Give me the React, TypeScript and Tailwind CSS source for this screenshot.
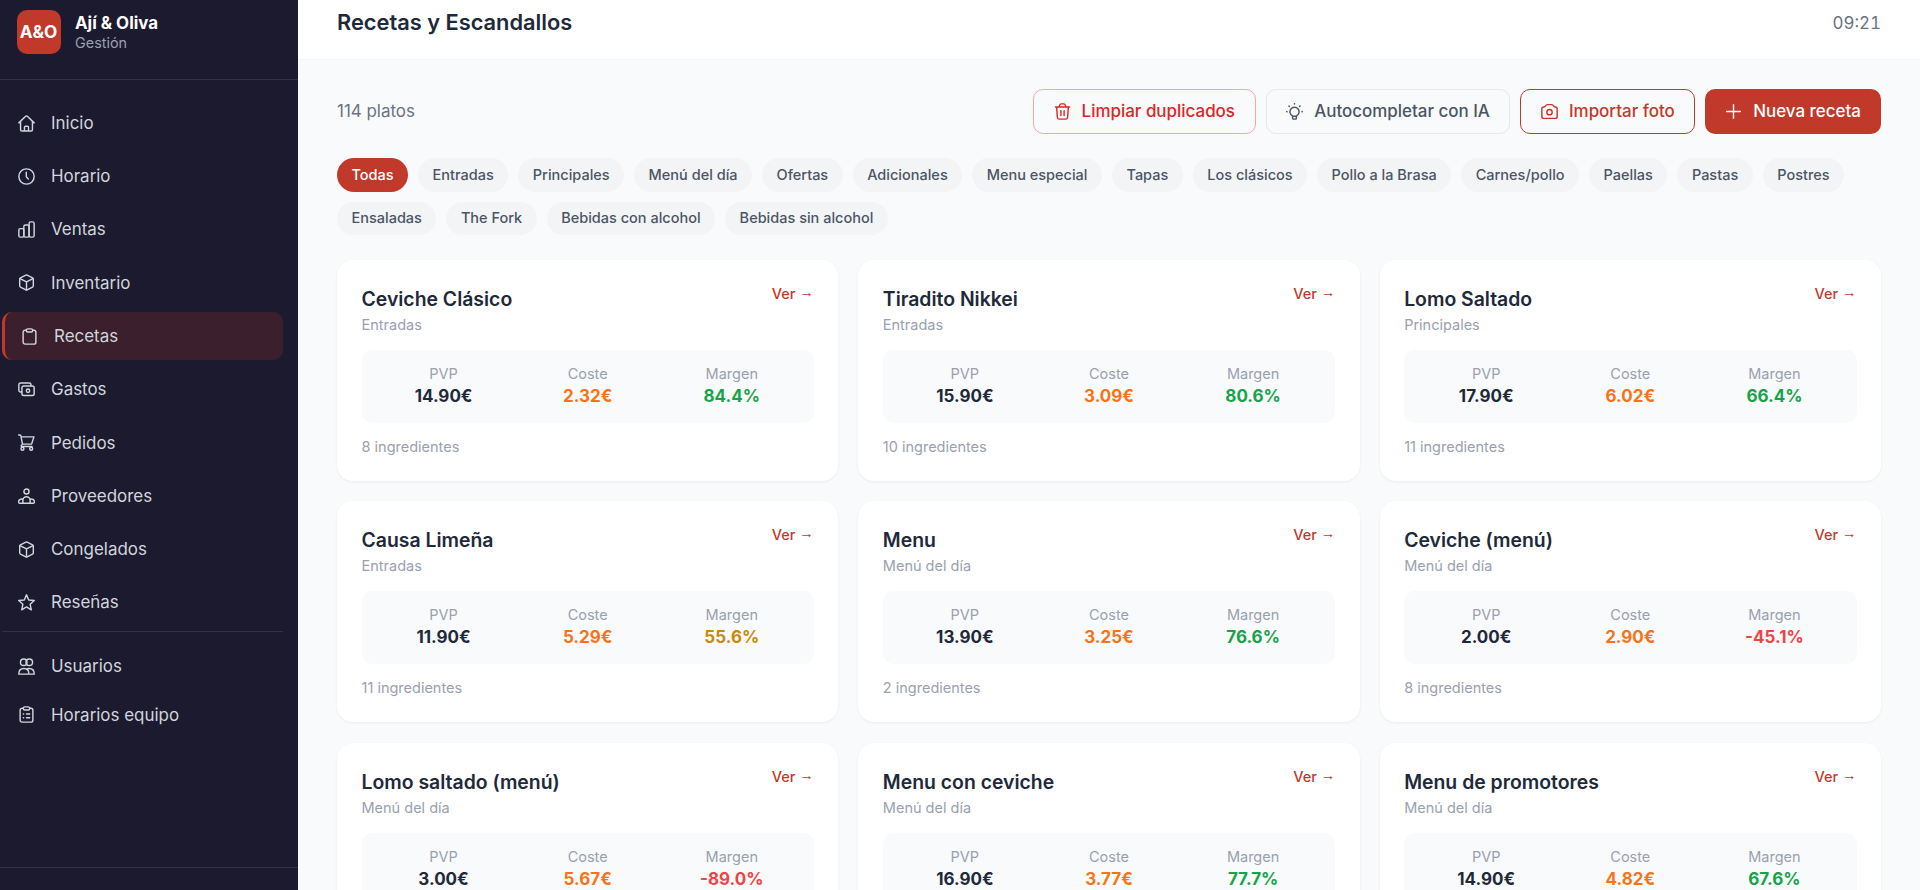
import { ReactNode } from "react";

const categories = [
  "Todas",
  "Entradas",
  "Principales",
  "Menú del día",
  "Ofertas",
  "Adicionales",
  "Menu especial",
  "Tapas",
  "Los clásicos",
  "Pollo a la Brasa",
  "Carnes/pollo",
  "Paellas",
  "Pastas",
  "Postres",
  "Ensaladas",
  "The Fork",
  "Bebidas con alcohol",
  "Bebidas sin alcohol",
];

const recipes = [
  { name: "Ceviche Clásico", category: "Entradas", pvp: 14.9, cost: 2.32, margin: 84.4, ingredients: 8 },
  { name: "Tiradito Nikkei", category: "Entradas", pvp: 15.9, cost: 3.09, margin: 80.6, ingredients: 10 },
  { name: "Lomo Saltado", category: "Principales", pvp: 17.9, cost: 6.02, margin: 66.4, ingredients: 11 },
  { name: "Causa Limeña", category: "Entradas", pvp: 11.9, cost: 5.29, margin: 55.6, ingredients: 11 },
  { name: "Menu", category: "Menú del día", pvp: 13.9, cost: 3.25, margin: 76.6, ingredients: 2 },
  { name: "Ceviche (menú)", category: "Menú del día", pvp: 2, cost: 2.9, margin: -45.1, ingredients: 8 },
  { name: "Lomo saltado (menú)", category: "Menú del día", pvp: 3, cost: 5.67, margin: -89, ingredients: 9 },
  { name: "Menu con ceviche", category: "Menú del día", pvp: 16.9, cost: 3.77, margin: 77.7, ingredients: 3 },
  { name: "Menu de promotores", category: "Menú del día", pvp: 14.9, cost: 4.82, margin: 67.6, ingredients: 4 },
];

function Icon({ children, className = "" }: { children: ReactNode; className?: string }) {
  return (
    <svg
      viewBox="0 0 16 16"
      fill="none"
      stroke="currentColor"
      strokeWidth="1.35"
      strokeLinecap="round"
      strokeLinejoin="round"
      className={`size-[17px] shrink-0 ${className}`}
    >
      {children}
    </svg>
  );
}

const box = (
  <>
    <path d="M7.4 1.1a1.3 1.3 0 0 1 1.2 0l5.1 2.6c.5.3.7.7.7 1.2v6.2c0 .5-.3 1-.7 1.2l-5.1 2.6a1.3 1.3 0 0 1-1.2 0l-5.1-2.6a1.4 1.4 0 0 1-.7-1.2V4.9c0-.5.2-.9.7-1.2z" />
    <path d="m1.9 4.4 6.1 3 6.1-3M8 7.4v7.4" />
  </>
);

const mainNav = [
  {
    label: "Inicio",
    icon: (
      <path d="M.8 7.4 7.2 1.2a1.2 1.2 0 0 1 1.6 0l6.4 6.2M2.4 6.2v7.6c0 .8.4 1.3 1.2 1.3h8.8c.8 0 1.2-.5 1.2-1.3V6.2M6.1 15v-3.4c0-.6.4-1 1-1h1.8c.6 0 1 .4 1 1V15" />
    ),
  },
  {
    label: "Horario",
    icon: (
      <>
        <circle cx="8" cy="8" r="7.2" />
        <path d="M7.8 4v4.2l1.9 2.2" />
      </>
    ),
  },
  {
    label: "Ventas",
    icon: (
      <>
        <rect x=".8" y="7.2" width="4.7" height="8" rx="1.3" />
        <rect x="5.5" y="3.8" width="4.9" height="11.4" rx="1.3" />
        <rect x="10.4" y=".8" width="4.8" height="14.4" rx="1.6" />
      </>
    ),
  },
  { label: "Inventario", icon: box },
  {
    label: "Recetas",
    active: true,
    icon: (
      <>
        <path d="M5 2.1H3.9A1.9 1.9 0 0 0 2 4v9.3a1.9 1.9 0 0 0 1.9 1.9h8.2a1.9 1.9 0 0 0 1.9-1.9V4a1.9 1.9 0 0 0-1.9-1.9H11" />
        <rect x="5" y=".8" width="6" height="3" rx="1.4" />
      </>
    ),
  },
  {
    label: "Gastos",
    icon: (
      <>
        <path d="M3.6 10.4H2.4A1.6 1.6 0 0 1 .8 8.8V3.4a1.6 1.6 0 0 1 1.6-1.6h8.2a1.6 1.6 0 0 1 1.6 1.6v1" />
        <rect x="3.7" y="4.7" width="11.5" height="9" rx="1.7" />
        <circle cx="9.4" cy="9.2" r="1.6" />
      </>
    ),
  },
  {
    label: "Pedidos",
    icon: (
      <>
        <path d="M.6.9h1.1c.5 0 .9.3 1 .8l1.5 7.8h8.6L15 2.7H3M4.2 9.5l-1 1.2c-.4.6-.1 1.1.6 1.1h9.4" />
        <circle cx="4.2" cy="13.9" r="1.4" />
        <circle cx="12.4" cy="13.9" r="1.4" />
      </>
    ),
  },
  {
    label: "Proveedores",
    icon: (
      <>
        <circle cx="8" cy="3.3" r="2.4" />
        <path d="M4.6 14.3v-2.7a3.4 3.4 0 0 1 6.8 0v2.7M4.6 10.4C2.1 10 .5 11.3.5 13.3c0 .7.4 1 1 1h13c.6 0 1-.3 1-1 0-2-1.6-3.3-4.1-2.9" />
      </>
    ),
  },
  { label: "Congelados", icon: box },
  {
    label: "Reseñas",
    icon: <path d="m8 .8 2.1 4.8 5.2.5-3.9 3.5 1.1 5.3L8 12.2l-4.5 2.7 1.1-5.3L.7 6.1l5.2-.5z" />,
  },
];

const teamNav = [
  {
    label: "Usuarios",
    icon: (
      <>
        <circle cx="5.4" cy="4" r="3.1" />
        <circle cx="10.6" cy="4" r="3.1" />
        <path d="M.7 15.2c0-3.5 1.6-5.4 4.8-5.4s4.8 1.9 4.8 5.4zM10.3 15.2h5c0-3.5-1.6-5.4-4.8-5.4-1 0-1.8.2-2.5.6" />
      </>
    ),
  },
  {
    label: "Horarios equipo",
    icon: (
      <>
        <path d="M5 2.1H3.9A1.9 1.9 0 0 0 2 4v9.3a1.9 1.9 0 0 0 1.9 1.9h8.2a1.9 1.9 0 0 0 1.9-1.9V4a1.9 1.9 0 0 0-1.9-1.9H11" />
        <rect x="5" y=".8" width="6" height="3" rx="1.4" />
        <path d="M5 7.6h.3M8 7.6h3M5 11h.3M8 11h3" />
      </>
    ),
  },
];

function marginColor(margin: number) {
  if (margin >= 60) return "text-[#16a34a]";
  if (margin >= 30) return "text-[#ca8a04]";
  return "text-[#ef4444]";
}

function Stat({ label, value, color }: { label: string; value: string; color: string }) {
  return (
    <div className="flex-1 text-center">
      <p className="text-[14.5px] leading-5 text-gray-400">{label}</p>
      <p className={`text-[17px] leading-6 font-bold ${color}`}>{value}</p>
    </div>
  );
}

function RecipeCard({ recipe }: { recipe: (typeof recipes)[number] }) {
  return (
    <div className="h-[221px] rounded-2xl bg-white px-[24.5px] pt-6 shadow-[0_1px_3px_rgba(0,0,0,0.06)]">
      <div className="flex items-start justify-between">
        <div>
          <h3 className="mt-px text-[19.4px] leading-7 font-semibold text-gray-800">{recipe.name}</h3>
          <p className="mt-0.5 text-[14.5px] leading-5 text-gray-400">{recipe.category}</p>
        </div>
        <a href="#" className="text-[14.5px] leading-5 font-medium text-[#c0392b]">
          Ver <span className="relative -top-0.5 font-['Liberation_Sans',sans-serif] text-[14.5px] font-bold">→</span>
        </a>
      </div>
      <div className="mt-[15px] flex h-[73px] rounded-[10px] bg-gray-50 px-2.5 pt-3.5">
        <Stat label="PVP" value={`${recipe.pvp.toFixed(2)}€`} color="text-gray-800" />
        <Stat label="Coste" value={`${recipe.cost.toFixed(2)}€`} color="text-[#f97316]" />
        <Stat label="Margen" value={`${recipe.margin.toFixed(1)}%`} color={marginColor(recipe.margin)} />
      </div>
      <p className="mt-3.5 text-[14.5px] leading-5 text-gray-400">{recipe.ingredients} ingredientes</p>
    </div>
  );
}

export default function App() {
  return (
    <div className="flex h-[890px] w-[1920px] overflow-hidden bg-gray-50 font-['Inter',sans-serif]">
      <aside className="flex w-[298px] shrink-0 flex-col bg-[#1c1a2e]">
        <div className="flex h-20 shrink-0 items-start gap-[14.5px] border-b border-white/10 pt-2.5 pl-[16.5px]">
          <div className="flex size-11 items-center justify-center rounded-[10px] bg-[#c0392b] text-[17.2px] font-bold text-white">
            A&O
          </div>
          <div className="pt-0.5">
            <p className="text-[16.9px] leading-[22px] font-bold text-white">Ají & Oliva</p>
            <p className="text-[14.4px] leading-[18px] text-gray-400">Gestión</p>
          </div>
        </div>

        <nav className="flex-1 pt-[19px] pr-[15px] pl-0.5 text-[16.94px] text-gray-300">
          <div className="flex flex-col gap-[5.3px] border-b border-white/10 pb-[4.5px]">
            {mainNav.map((item) => (
              <a
                key={item.label}
                href="#"
                className={`flex h-12 items-center gap-4 rounded-[10px] pl-4 ${item.active ? "border-l-[3px] border-[#c0392b] bg-[#c0392b]/20" : ""}`}
              >
                <Icon>{item.icon}</Icon>
                <span className="pt-px">{item.label}</span>
              </a>
            ))}
          </div>
          <div className="flex flex-col pt-2.5">
            {teamNav.map((item) => (
              <a key={item.label} href="#" className="flex h-[48.4px] items-center gap-4 pl-4">
                <Icon>{item.icon}</Icon>
                <span className="pt-px">{item.label}</span>
              </a>
            ))}
          </div>
        </nav>
        <div className="h-[23px] border-t border-white/10" />
      </aside>

      <main className="flex min-w-0 flex-1 flex-col">
        <header className="flex h-[60px] shrink-0 items-start justify-between border-b border-gray-100 bg-white px-[39px] pt-2">
          <h1 className="text-[21.8px] leading-7 font-semibold text-gray-800">Recetas y Escandallos</h1>
          <span className="pt-px text-[16.94px] leading-7 text-gray-500 tabular-nums">09:21</span>
        </header>

        <div className="px-[39px] pt-[28.5px]">
          <div className="flex h-[45.5px] items-center justify-between">
            <p className="pt-px text-[16.94px] text-gray-500">114 platos</p>
            <div className="flex gap-2.5 text-[16.94px] font-medium">
              <button className="flex h-[45.5px] items-center gap-[11px] rounded-[10px] border border-[#fca5a5] px-[19.7px] text-[#dc2626]">
                <Icon>
                  <path d="M1.4 3.7h13.2M4.9 3.5l.5-1.6c.2-.7.6-1.1 1.3-1.1h2.6c.7 0 1.1.4 1.3 1.1l.5 1.6M2.5 3.9l.7 9.7c.1 1 .7 1.6 1.7 1.6h6.2c1 0 1.6-.6 1.7-1.6l.7-9.7M6.5 7.2v4.6M9.5 7.2v4.6" />
                </Icon>
                <span className="pt-px">Limpiar duplicados</span>
              </button>
              <button className="flex h-[45.5px] items-center gap-[11px] rounded-[10px] border border-gray-200 px-[19.6px] text-gray-600">
                <Icon>
                  <path d="M6.2 12.2A4.3 4.3 0 1 1 9.8 12.2v1.9c0 .6-.4 1.1-1 1.1H7.2c-.6 0-1-.5-1-1.1zM6.4 12.4h3.2M8 .6v.4M2.8 2.9l.3.3M13.2 2.9l-.3.3M.6 8.2H1M15 8.2h.4" />
                </Icon>
                <span className="pt-px">Autocompletar con IA</span>
              </button>
              <button className="flex h-[45.5px] items-center gap-[11px] rounded-[10px] border border-[#c0392b] px-[19.5px] text-[#c0392b]">
                <Icon>
                  <path d="M.8 5.4c0-1.1.6-1.7 1.8-1.7.9 0 1.2-.2 1.6-.9.4-.8.9-1.3 1.8-1.3h4c.9 0 1.4.5 1.8 1.3.4.7.7.9 1.6.9 1.2 0 1.8.6 1.8 1.7v7.3c0 1.1-.6 1.8-1.8 1.8H2.6c-1.2 0-1.8-.7-1.8-1.8z" />
                  <circle cx="8" cy="8.6" r="2.5" />
                </Icon>
                <span className="pt-px">Importar foto</span>
              </button>
              <button className="flex h-[45.5px] items-center gap-[11px] rounded-[10px] bg-[#c0392b] px-5 text-white">
                <Icon>
                  <path d="M8 1.6v12.8M1.6 8h12.8" />
                </Icon>
                <span className="pt-px">Nueva receta</span>
              </button>
            </div>
          </div>

          {/* CATEGORY FILTERS */}
          <div className="mt-6 flex flex-wrap gap-2.5 text-[14.5px] font-medium text-gray-600">
            {categories.map((category, i) => (
              <button
                key={category}
                className={`h-[33.5px] rounded-full px-[14.5px] ${i === 0 ? "bg-[#c0392b] text-white" : "bg-gray-100"}`}
              >
                {category}
              </button>
            ))}
          </div>

          {/* RECIPES */}
          <div className="mt-[24.8px] grid grid-cols-3 gap-x-5 gap-y-[20.4px]">
            {recipes.map((recipe) => (
              <RecipeCard key={recipe.name} recipe={recipe} />
            ))}
          </div>
        </div>
      </main>
    </div>
  );
}
